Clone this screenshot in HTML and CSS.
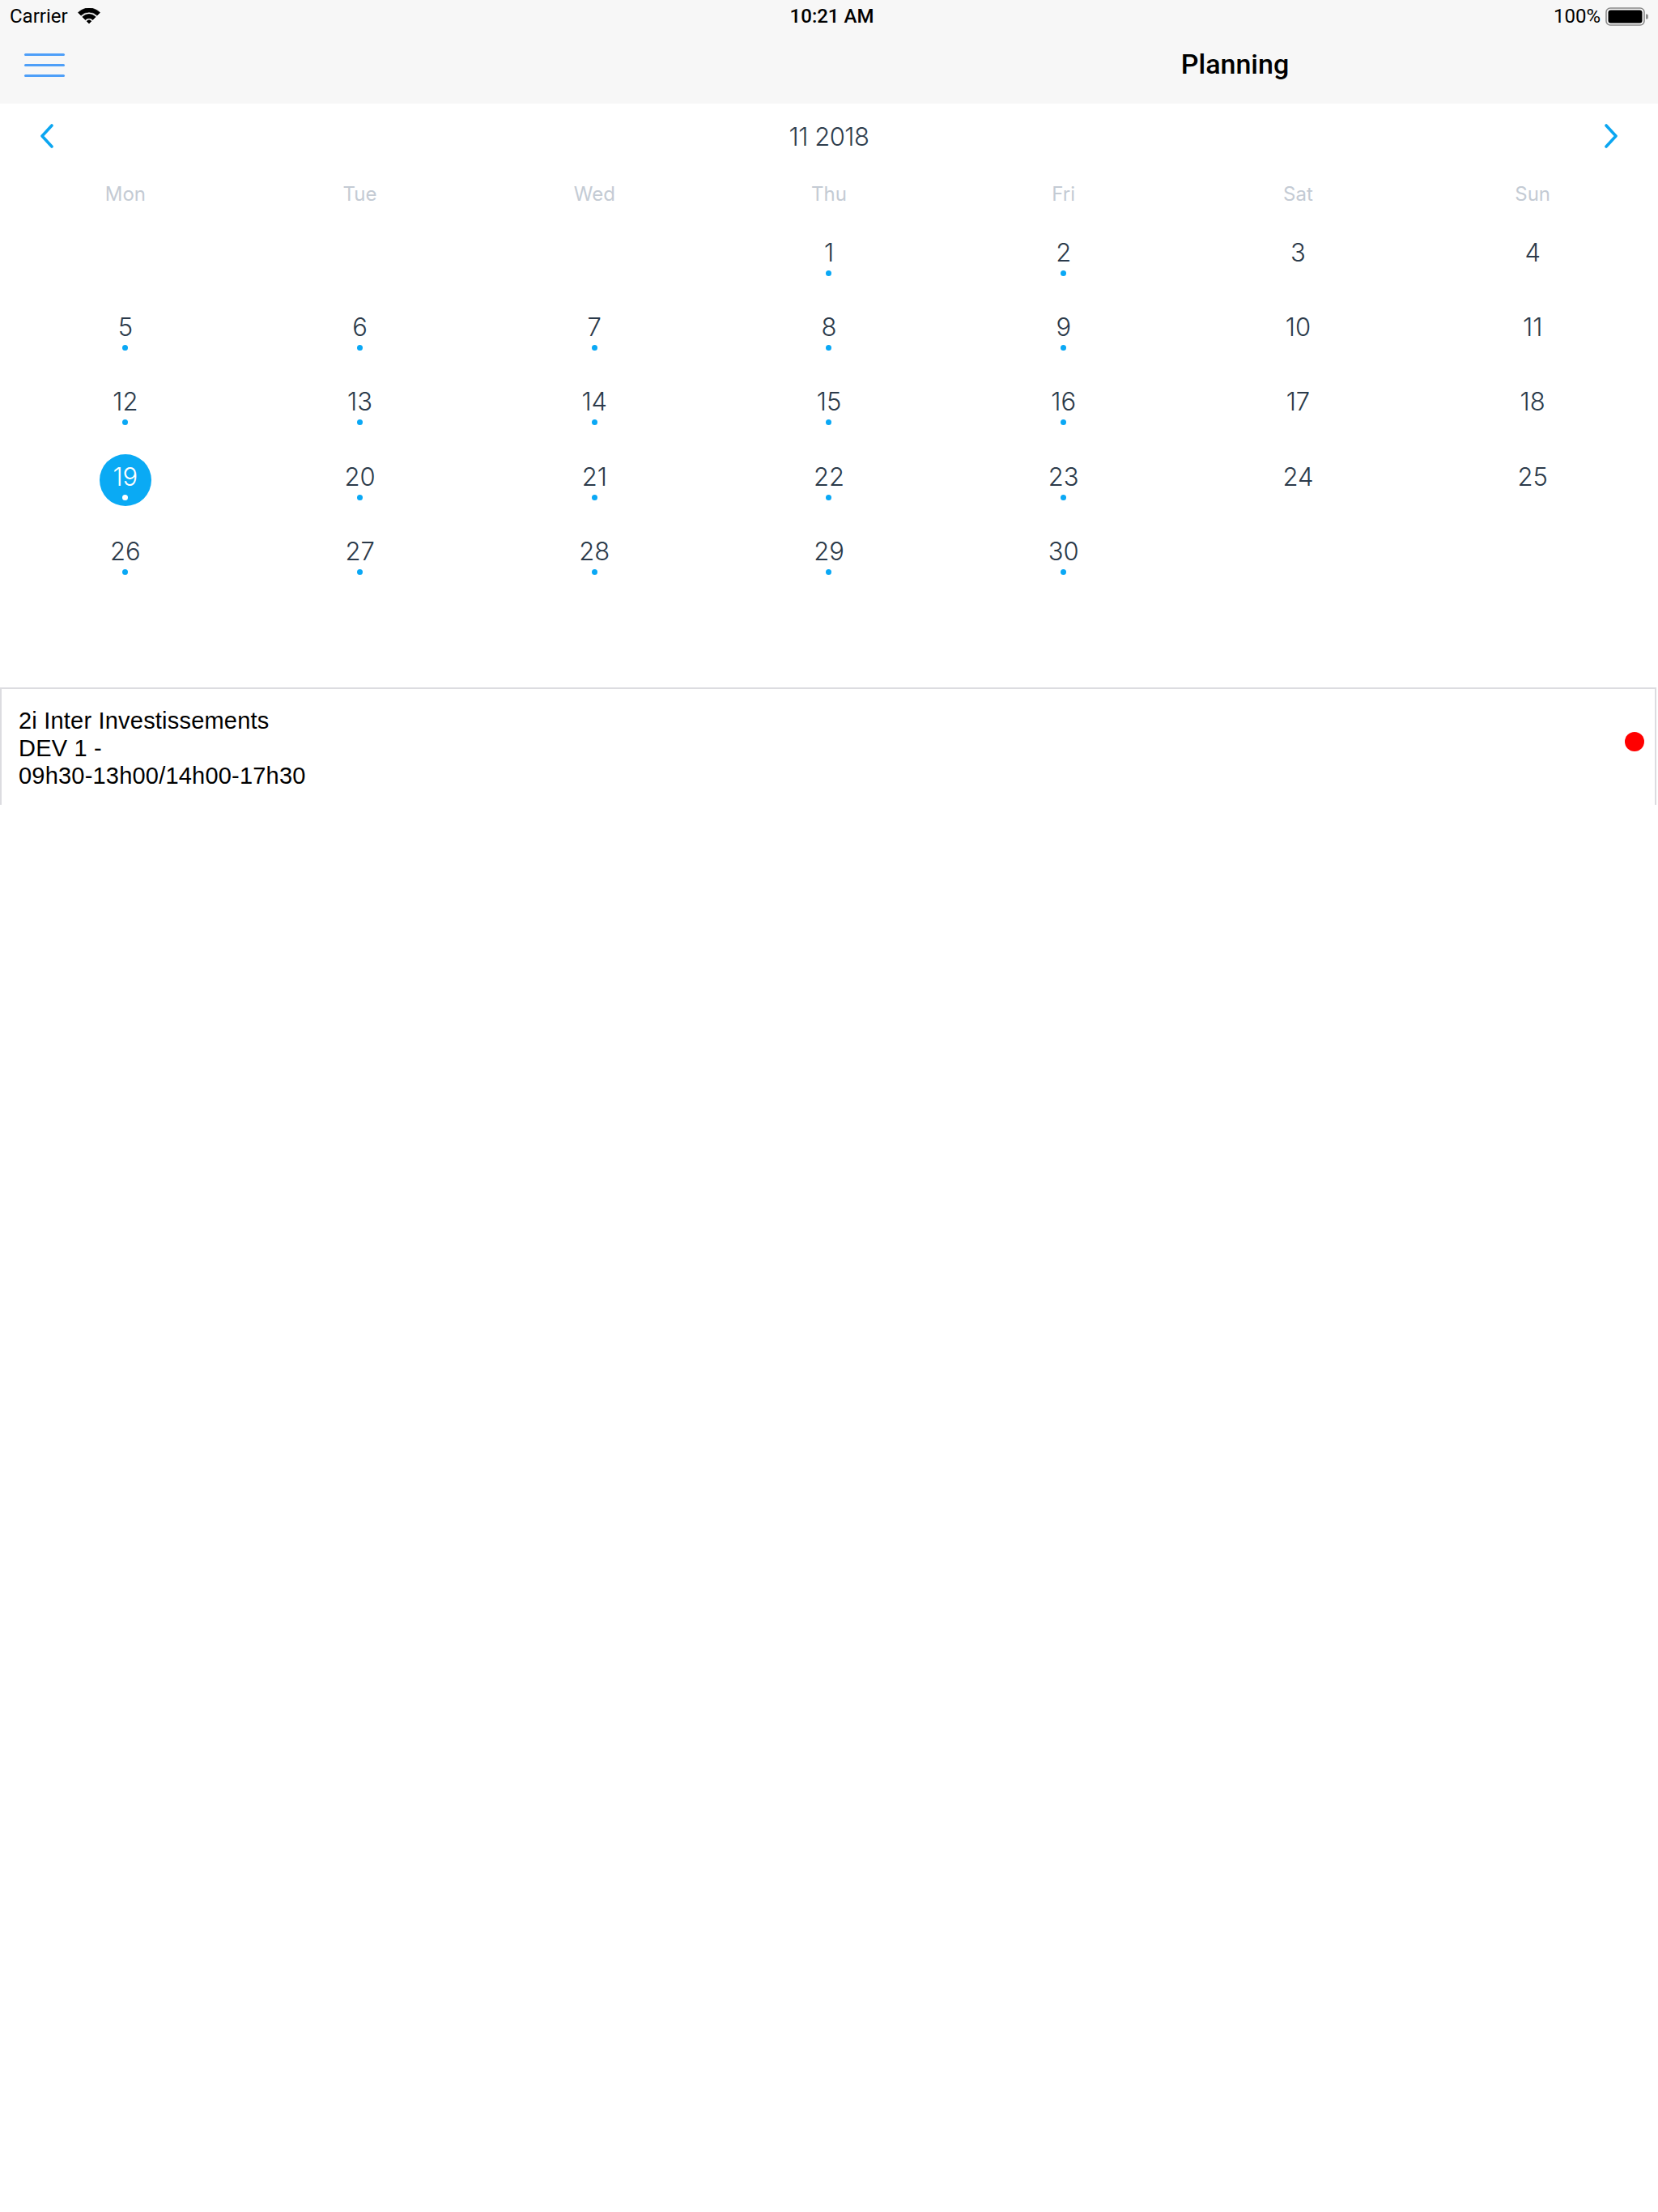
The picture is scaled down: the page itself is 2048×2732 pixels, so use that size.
FILE: index.html
```html
<!DOCTYPE html>
<html lang="fr">
<head>
<meta charset="utf-8">
<title>Planning</title>
<link rel="stylesheet" href="styles.css">
</head>
<body>
<div class="statusbar">
  <div class="sb-left">
    <span class="carrier">Carrier</span>
    <svg class="wifi" width="28" height="20" viewBox="0 0 28 20" aria-hidden="true">
      <path d="M0.57 5.57 A19 19 0 0 1 27.43 5.57 L23.9 9.1 A14 14 0 0 0 4.1 9.1 Z"/>
      <path d="M5.87 10.87 A11.5 11.5 0 0 1 22.13 10.87 L18.6 14.4 A6.5 6.5 0 0 0 9.4 14.4 Z"/>
      <path d="M14 19 L11.17 16.17 A4 4 0 0 1 16.83 16.17 Z"/>
    </svg>
  </div>
  <div class="sb-center">10:21 AM</div>
  <div class="sb-right">
    <span class="battery-pct">100%</span>
    <svg class="battery" width="54" height="24" viewBox="0 0 54 24" aria-hidden="true">
      <rect x="1" y="1" width="47" height="21" rx="5" ry="5" fill="none" stroke="#8a8a8a" stroke-width="1.6"/>
      <rect x="3.5" y="3.5" width="42" height="16" rx="3" ry="3" fill="#000"/>
      <path d="M50 8.5 h1.2 a1.6 1.6 0 0 1 1.6 1.6 v2.8 a1.6 1.6 0 0 1 -1.6 1.6 h-1.2 z" fill="#8a8a8a"/>
    </svg>
  </div>
</div>

<header class="navbar">
  <div class="nav-master">
    <div class="menu" aria-label="Menu"><span></span><span></span><span></span></div>
  </div>
  <div class="nav-detail">
    <h1 class="title">Planning</h1>
  </div>
</header>

<section class="calendar">
  <div class="cal-header">
    <svg class="chev" width="18" height="30" viewBox="0 0 18 30" aria-hidden="true"><path d="M15 2 L3 15 L15 28"/></svg>
    <div class="month">11 2018</div>
    <svg class="chev" width="18" height="30" viewBox="0 0 18 30" aria-hidden="true"><path d="M3 2 L15 15 L3 28"/></svg>
  </div>
  <div class="weekdays">
    <div>Mon</div><div>Tue</div><div>Wed</div><div>Thu</div><div>Fri</div><div>Sat</div><div>Sun</div>
  </div>
  <div class="days">
    <div class="day"></div>
    <div class="day"></div>
    <div class="day"></div>
    <div class="day"><div class="cell"><span class="num">1</span><span class="dot"></span></div></div>
    <div class="day"><div class="cell"><span class="num">2</span><span class="dot"></span></div></div>
    <div class="day"><div class="cell"><span class="num">3</span></div></div>
    <div class="day"><div class="cell"><span class="num">4</span></div></div>

    <div class="day"><div class="cell"><span class="num">5</span><span class="dot"></span></div></div>
    <div class="day"><div class="cell"><span class="num">6</span><span class="dot"></span></div></div>
    <div class="day"><div class="cell"><span class="num">7</span><span class="dot"></span></div></div>
    <div class="day"><div class="cell"><span class="num">8</span><span class="dot"></span></div></div>
    <div class="day"><div class="cell"><span class="num">9</span><span class="dot"></span></div></div>
    <div class="day"><div class="cell"><span class="num">10</span></div></div>
    <div class="day"><div class="cell"><span class="num">11</span></div></div>

    <div class="day"><div class="cell"><span class="num">12</span><span class="dot"></span></div></div>
    <div class="day"><div class="cell"><span class="num">13</span><span class="dot"></span></div></div>
    <div class="day"><div class="cell"><span class="num">14</span><span class="dot"></span></div></div>
    <div class="day"><div class="cell"><span class="num">15</span><span class="dot"></span></div></div>
    <div class="day"><div class="cell"><span class="num">16</span><span class="dot"></span></div></div>
    <div class="day"><div class="cell"><span class="num">17</span></div></div>
    <div class="day"><div class="cell"><span class="num">18</span></div></div>

    <div class="day"><div class="cell selected"><span class="num">19</span><span class="dot"></span></div></div>
    <div class="day"><div class="cell"><span class="num">20</span><span class="dot"></span></div></div>
    <div class="day"><div class="cell"><span class="num">21</span><span class="dot"></span></div></div>
    <div class="day"><div class="cell"><span class="num">22</span><span class="dot"></span></div></div>
    <div class="day"><div class="cell"><span class="num">23</span><span class="dot"></span></div></div>
    <div class="day"><div class="cell"><span class="num">24</span></div></div>
    <div class="day"><div class="cell"><span class="num">25</span></div></div>

    <div class="day"><div class="cell"><span class="num">26</span><span class="dot"></span></div></div>
    <div class="day"><div class="cell"><span class="num">27</span><span class="dot"></span></div></div>
    <div class="day"><div class="cell"><span class="num">28</span><span class="dot"></span></div></div>
    <div class="day"><div class="cell"><span class="num">29</span><span class="dot"></span></div></div>
    <div class="day"><div class="cell"><span class="num">30</span><span class="dot"></span></div></div>
    <div class="day"></div>
    <div class="day"></div>
  </div>
</section>

<section class="events">
  <div class="event-card">
    <div class="event-text">
      <div>2i Inter Investissements</div>
      <div>DEV 1 -</div>
      <div>09h30-13h00/14h00-17h30</div>
    </div>
    <span class="status-dot"></span>
  </div>
</section>
</body>
</html>
```

FILE: styles.css
```css
html, body {
  margin: 0;
  padding: 0;
  background: #ffffff;
}

body {
  width: 2048px;
  min-height: 2732px;
  font-family: Roboto, "Liberation Sans", sans-serif;
  color: #000;
}

/* ---------- status bar ---------- */
.statusbar {
  height: 40px;
  background: #f7f7f7;
  display: grid;
  grid-template-columns: 1fr auto 1fr;
  align-items: center;
  padding: 0 11px 0 12px;
  font-size: 24px;
  line-height: 40px;
}

.sb-left {
  display: flex;
  align-items: center;
  gap: 12px;
}

.wifi path {
  fill: #000;
  stroke: #000;
  stroke-width: 0.8;
  stroke-linejoin: round;
}

.sb-center {
  font-weight: 500;
  padding-left: 6px;
}

.sb-right {
  display: flex;
  align-items: center;
  justify-content: flex-end;
  gap: 6px;
}

.battery {
  margin-top: 2px;
}

/* ---------- nav bar ---------- */
.navbar {
  height: 88px;
  background: #f7f7f7;
  display: flex;
  align-items: center;
  padding-bottom: 8px;
  box-sizing: border-box;
}

.nav-master {
  width: 1003px;
  padding-left: 30px;
  box-sizing: border-box;
}

.menu {
  width: 50px;
  display: flex;
  flex-direction: column;
  gap: 10px;
}

.menu span {
  display: block;
  height: 3px;
  border-radius: 2px;
  background: #4e9ff8;
}

.nav-detail {
  flex: 1;
  text-align: center;
  padding-bottom: 2px;
}

.title {
  margin: 0;
  font-size: 34px;
  font-weight: 500;
  line-height: 40px;
  color: #000;
}

/* ---------- calendar ---------- */
.calendar {
  padding: 0 10px 118px;
  font-family: Inter, Roboto, sans-serif;
}

.cal-header {
  height: 80px;
  display: flex;
  align-items: center;
  justify-content: space-between;
  padding: 0 39px 0 39px;
}

.chev path {
  fill: none;
  stroke: #0ba6f1;
  stroke-width: 3.6;
  stroke-linecap: round;
  stroke-linejoin: round;
}

.month {
  font-size: 31px;
  font-weight: 300;
  color: #2e3d4d;
  letter-spacing: -0.5px;
}

.weekdays {
  height: 61.5px;
  display: grid;
  grid-template-columns: repeat(7, 1fr);
  align-items: center;
  text-align: center;
  font-size: 24px;
  font-weight: 400;
  color: #c4cbd4;
  padding-top: 1.5px;
  box-sizing: border-box;
}

.days {
  display: grid;
  grid-template-columns: repeat(7, 1fr);
  grid-auto-rows: 92.4px;
}

.day {
  display: flex;
  justify-content: center;
  align-items: center;
}

.cell {
  width: 64px;
  height: 64px;
  border-radius: 50%;
  display: flex;
  flex-direction: column;
  align-items: center;
  padding-top: 12px;
  box-sizing: border-box;
}

.num {
  font-size: 31px;
  font-weight: 300;
  line-height: 32px;
  color: #2b3a4a;
}

.dot {
  width: 7px;
  height: 7px;
  border-radius: 50%;
  background: #0aa8f5;
  margin-top: 6px;
}

.cell.selected {
  background: #0aaaf4;
}

.cell.selected .num {
  color: #ffffff;
}

.cell.selected .dot {
  background: #ffffff;
}

/* ---------- events ---------- */
.event-card {
  height: 145px;
  box-sizing: border-box;
  margin-right: 2px;
  border: 2px solid #dcdce0;
  border-bottom: none;
  display: flex;
  justify-content: space-between;
  align-items: flex-start;
  padding: 22px 13px 0 21px;
}

.event-text {
  font-family: "Liberation Sans", Arial, sans-serif;
  font-size: 29px;
  line-height: 34px;
  letter-spacing: 0.2px;
  color: #000;
}

.status-dot {
  width: 24px;
  height: 24px;
  border-radius: 50%;
  background: #ff0000;
  margin-top: 31px;
}
```
